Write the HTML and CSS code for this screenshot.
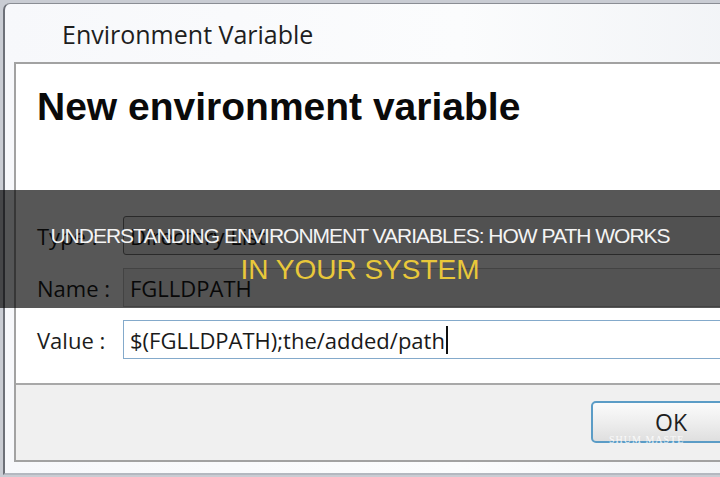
FILE: index.html
```html
<!DOCTYPE html>
<html lang="en">
<head>
<meta charset="utf-8">
<title>Understanding Environment Variables</title>
<link rel="stylesheet" href="styles.css">
</head>
<body>
<div class="window">
  <div class="titlebar"><span class="title">Environment Variable</span></div>
  <div class="panel">
    <div class="content">
      <h1 class="heading">New environment variable</h1>
      <div class="rows">
        <div class="row">
          <span class="label">Type :</span>
          <div class="field field-select">Directory List</div>
        </div>
        <div class="row">
          <span class="label">Name :</span>
          <div class="field field-ro">FGLLDPATH</div>
        </div>
        <div class="row">
          <span class="label">Value :</span>
          <div class="field field-edit"><span class="val">$(FGLLDPATH);the/added/path</span><span class="caret"></span></div>
        </div>
      </div>
    </div>
    <div class="buttons">
      <div class="ok-wrap">
        <button class="ok">OK</button>
        <span class="wm">SHUM MASTE</span>
      </div>
    </div>
  </div>
</div>
<div class="banner">
  <p class="line1">UNDERSTANDING ENVIRONMENT VARIABLES: HOW PATH WORKS</p>
  <p class="line2">IN YOUR SYSTEM</p>
</div>
</body>
</html>
```

FILE: styles.css
```css
html, body {
  margin: 0;
  padding: 0;
}
body {
  width: 720px;
  height: 477px;
  overflow: hidden;
  background: #c9ccd3;
  position: relative;
  font-family: "Open Sans", "Noto Sans", sans-serif;
}
.window {
  margin: 3px 0 0 3px;
  height: 472px;
  width: 760px;
  box-sizing: border-box;
  background: linear-gradient(90deg, #f7f8fb 0%, #fbfcfd 60%, #f1f3f6 100%);
  border-left: 2px solid #6d7078;
  border-top: 1px solid #8a8d94;
  border-bottom: 2px solid #b4b8c0;
  border-top-left-radius: 7px;
  display: flex;
  flex-direction: column;
}
.titlebar {
  height: 58px;
  display: flex;
  align-items: center;
  padding-left: 57px;
}
.title {
  font-size: 25px;
  color: #1e1e1e;
  margin-top: 2px;
}
.panel {
  margin-left: 9px;
  border-top: 2px solid #a2a2a2;
  border-left: 2px solid #a2a2a2;
  border-bottom: 2px solid #a2a2a2;
  display: flex;
  flex-direction: column;
}
.content {
  background: #ffffff;
  padding: 21px 0 24px 21px;
}
.heading {
  margin: 0;
  font-family: "Liberation Sans", Arial, sans-serif;
  font-weight: bold;
  font-size: 39px;
  line-height: 44px;
  color: #0a0a0a;
}
.rows {
  margin-top: 87px;
  display: flex;
  flex-direction: column;
  gap: 13px;
}
.row {
  display: flex;
  align-items: center;
  height: 39px;
}
.label {
  width: 86px;
  font-size: 22px;
  color: #1c1c1c;
}
.field {
  flex: 1;
  height: 39px;
  box-sizing: border-box;
  display: flex;
  align-items: center;
  padding-left: 6px;
  font-size: 22px;
  color: #1a1a1a;
}
.field-select {
  background: #ececec;
  border: 1px solid #7c7c7c;
  border-radius: 3px;
}
.field-ro {
  background: #f2f2f2;
  border: 1px solid #c4c4c4;
}
.field-edit {
  background: #ffffff;
  border: 1px solid #84aacb;
}
.caret {
  width: 2px;
  height: 28px;
  background: #111;
  margin-left: 1px;
}
.buttons {
  background: #f0f0f0;
  border-top: 2px solid #a8a8a8;
  height: 77px;
  padding: 16px 0 0 575px;
  box-sizing: border-box;
}
.ok-wrap {
  position: relative;
  width: 160px;
  height: 42px;
}
.ok {
  width: 160px;
  height: 42px;
  border: 2px solid #5b9cc6;
  border-radius: 5px;
  background: linear-gradient(#fbfbfb 0%, #eeeeee 50%, #dfdfdf 100%);
  font-family: "Open Sans", "Noto Sans", sans-serif;
  font-size: 23px;
  color: #1e1e1e;
  padding: 0;
}
.wm {
  position: absolute;
  left: 18px;
  bottom: -2px;
  font-family: "Liberation Serif", serif;
  font-size: 10px;
  letter-spacing: 1px;
  color: rgba(255, 255, 255, 0.85);
}
.banner {
  position: absolute;
  left: 0;
  top: 190px;
  width: 720px;
  height: 118px;
  background: rgba(0, 0, 0, 0.66);
  box-sizing: border-box;
  padding-top: 29px;
  text-align: center;
  font-family: "Liberation Sans", Arial, sans-serif;
}
.banner p {
  margin: 0;
}
.line1 {
  font-size: 21px;
  line-height: 34px;
  letter-spacing: -1px;
  color: #f4f4f4;
}
.line2 {
  font-size: 28px;
  line-height: 34px;
  color: #e9c83a;
}
```
